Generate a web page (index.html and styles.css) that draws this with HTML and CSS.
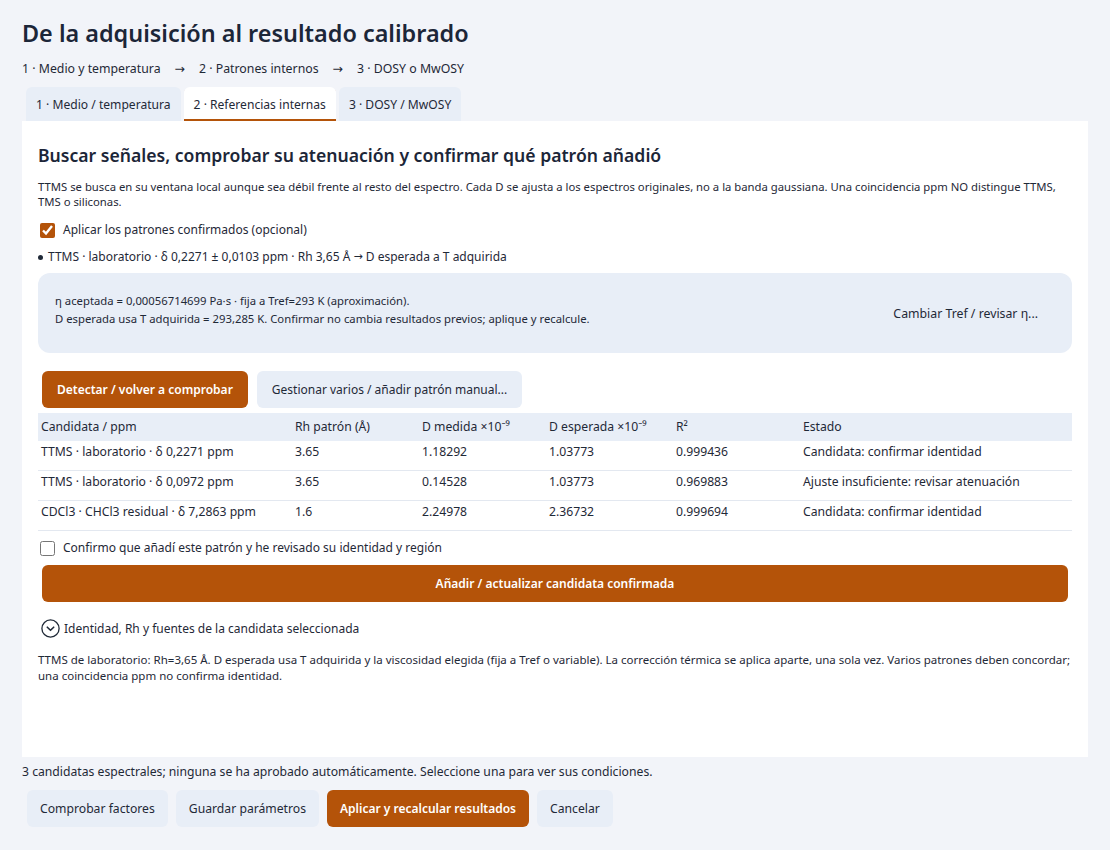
FILE: index.html
```html
<!DOCTYPE html>
<html lang="es">
<head>
    <meta charset="UTF-8">
    <meta name="viewport" content="width=device-width, initial-scale=1.0">
    <title>De la adquisición al resultado calibrado</title>
    <link rel="stylesheet" href="styles.css">
</head>
<body>
    <h1 class="page-title">De la adquisición al resultado calibrado</h1>

    <div class="steps">
        <span>1 · Medio y temperatura</span>
        <span class="arrow">→</span>
        <span>2 · Patrones internos</span>
        <span class="arrow">→</span>
        <span>3 · DOSY o MwOSY</span>
    </div>

    <div class="tabs">
        <button class="tab">1 · Medio / temperatura</button>
        <button class="tab active">2 · Referencias internas</button>
        <button class="tab">3 · DOSY / MwOSY</button>
    </div>

    <div class="panel">
        <h2 class="panel-title">Buscar señales, comprobar su atenuación y confirmar qué patrón añadió</h2>
        <p class="hint">TTMS se busca en su ventana local aunque sea débil frente al resto del espectro. Cada D se ajusta a los espectros originales, no a la banda gaussiana. Una coincidencia ppm NO distingue TTMS, TMS o siliconas.</p>

        <label class="check">
            <input type="checkbox" checked>
            <span>Aplicar los patrones confirmados (opcional)</span>
        </label>

        <div class="pattern-line"><span class="dot"></span>TTMS · laboratorio · δ 0,2271 ± 0,0103 ppm · Rh 3,65 Å <span class="arrow-inline">→</span> D esperada a T adquirida</div>

        <div class="info-box">
            <div class="info-text">
                η aceptada = 0,00056714699 Pa·s · fija a Tref=293 K (aproximación).<br>
                D esperada usa T adquirida = 293,285 K. Confirmar no cambia resultados previos; aplique y recalcule.
            </div>
            <button class="btn btn-flat">Cambiar Tref / revisar η...</button>
        </div>

        <div class="actions">
            <button class="btn btn-primary">Detectar / volver a comprobar</button>
            <button class="btn">Gestionar varios / añadir patrón manual...</button>
        </div>

        <table class="candidates">
            <colgroup>
                <col style="width: 254px">
                <col style="width: 127px">
                <col style="width: 127px">
                <col style="width: 127px">
                <col style="width: 127px">
                <col>
            </colgroup>
            <thead>
                <tr>
                    <th>Candidata / ppm</th>
                    <th>Rh patrón (Å)</th>
                    <th>D medida ×10⁻⁹</th>
                    <th>D esperada ×10⁻⁹</th>
                    <th>R²</th>
                    <th>Estado</th>
                </tr>
            </thead>
            <tbody>
                <tr>
                    <td>TTMS · laboratorio · δ 0,2271 ppm</td>
                    <td>3.65</td>
                    <td>1.18292</td>
                    <td>1.03773</td>
                    <td>0.999436</td>
                    <td>Candidata: confirmar identidad</td>
                </tr>
                <tr>
                    <td>TTMS · laboratorio · δ 0,0972 ppm</td>
                    <td>3.65</td>
                    <td>0.14528</td>
                    <td>1.03773</td>
                    <td>0.969883</td>
                    <td>Ajuste insuficiente: revisar atenuación</td>
                </tr>
                <tr>
                    <td>CDCl3 · CHCl3 residual · δ 7,2863 ppm</td>
                    <td>1.6</td>
                    <td>2.24978</td>
                    <td>2.36732</td>
                    <td>0.999694</td>
                    <td>Candidata: confirmar identidad</td>
                </tr>
            </tbody>
        </table>

        <label class="check check-confirm">
            <input type="checkbox">
            <span>Confirmo que añadí este patrón y he revisado su identidad y región</span>
        </label>

        <button class="btn btn-primary btn-wide">Añadir / actualizar candidata confirmada</button>

        <div class="toggle">
            <svg class="toggle-icon" width="19" height="19" viewBox="0 0 19 19">
                <circle cx="9.5" cy="9.5" r="8.6" fill="none" stroke="#1f2937" stroke-width="1.3"/>
                <path d="M6.3 8.2 L9.5 11.3 L12.7 8.2" fill="none" stroke="#1f2937" stroke-width="1.6" stroke-linecap="round" stroke-linejoin="round"/>
            </svg>
            <span>Identidad, Rh y fuentes de la candidata seleccionada</span>
        </div>

        <p class="note">TTMS de laboratorio: Rh=3,65 Å. D esperada usa T adquirida y la viscosidad elegida (fija a Tref o variable). La corrección térmica se aplica aparte, una sola vez. Varios patrones deben concordar; una coincidencia ppm no confirma identidad.</p>
    </div>

    <p class="status">3 candidatas espectrales; ninguna se ha aprobado automáticamente. Seleccione una para ver sus condiciones.</p>

    <div class="footer-actions">
        <button class="btn">Comprobar factores</button>
        <button class="btn">Guardar parámetros</button>
        <button class="btn btn-primary">Aplicar y recalcular resultados</button>
        <button class="btn">Cancelar</button>
    </div>
</body>
</html>
```

FILE: styles.css
```css
body {
    margin: 0;
    padding: 17px 22px 0;
    font-family: "Noto Sans", "Open Sans", sans-serif;
    background-color: #f2f4f9;
    color: #1f2937;
}

.page-title {
    margin: 0;
    font-size: 23.4px;
    line-height: 32px;
    font-weight: 600;
    color: #1c2638;
}

.steps {
    display: flex;
    gap: 14px;
    margin-top: 11px;
    font-size: 12.3px;
    line-height: 18px;
}

.steps .arrow {
    font-family: "DejaVu Sans", sans-serif;
    font-size: 12.5px;
}

.arrow-inline {
    font-family: "DejaVu Sans", sans-serif;
    font-size: 11px;
}

.tabs {
    display: flex;
    gap: 3px;
    margin-top: 9px;
    padding-left: 4px;
}

.tab {
    height: 34px;
    padding: 0 10px;
    border: none;
    border-radius: 6px 6px 0 0;
    background-color: #e8eef7;
    font-family: inherit;
    font-size: 12.1px;
    color: #1f2937;
    cursor: pointer;
}

.tab.active {
    background-color: #fff;
    box-shadow: inset 0 -2px 0 #b45309;
}

.panel {
    box-sizing: border-box;
    min-height: 636px;
    padding: 22px 16px 16px;
    background-color: #fff;
}

.panel-title {
    margin: 0;
    font-size: 17.6px;
    line-height: 24px;
    font-weight: 600;
    color: #1c2638;
}

.hint {
    margin: 12px 0 0;
    font-size: 11.3px;
    line-height: 15px;
}

.check {
    display: flex;
    align-items: center;
    gap: 8px;
    margin-top: 12px;
    font-size: 12px;
    line-height: 18px;
}

.check input {
    width: 15px;
    height: 15px;
    margin: 0 0 0 2px;
    accent-color: #b45309;
}

.pattern-line {
    display: flex;
    align-items: center;
    margin-top: 9px;
    font-size: 12px;
    line-height: 18px;
    white-space: pre;
}

.dot {
    width: 5px;
    height: 5px;
    margin-right: 5px;
    border-radius: 50%;
    background-color: #1f2937;
}

.info-box {
    display: flex;
    align-items: center;
    justify-content: space-between;
    box-sizing: border-box;
    min-height: 80px;
    margin-top: 7px;
    padding: 12px 15px 12px 17px;
    border-radius: 12px;
    background-color: #e8eef7;
}

.info-text {
    padding-bottom: 6px;
    font-size: 11.3px;
    line-height: 18px;
}

.btn {
    margin: 4px;
    padding: 9px 15px;
    border: none;
    border-radius: 6px;
    background-color: #e8eef7;
    font-family: inherit;
    font-size: 12px;
    line-height: 19px;
    color: #1f2937;
    cursor: pointer;
}

.btn-primary {
    background-color: #b45309;
    color: #fff;
    font-weight: 600;
}

.btn-flat {
    background: transparent;
    font-size: 12.3px;
}

.actions {
    display: flex;
    gap: 1px;
    margin-top: 14px;
}

.candidates {
    width: 100%;
    margin-top: 1px;
    border-collapse: collapse;
    table-layout: fixed;
    font-size: 12.2px;
}

.candidates th {
    padding: 5px 3px;
    background-color: #e8eef7;
    font-weight: 400;
    line-height: 18px;
    text-align: left;
}

.candidates td {
    padding: 2px 3px 10px;
    border-bottom: 1px solid #e3e8f0;
    line-height: 17px;
    white-space: nowrap;
}

.check-confirm {
    margin-top: 8px;
}

.btn-wide {
    display: block;
    width: calc(100% - 8px);
    margin-top: 8px;
}

.toggle {
    display: flex;
    align-items: center;
    gap: 4px;
    margin-top: 17px;
    margin-left: 3px;
    font-size: 12px;
    line-height: 19px;
}

.note {
    margin: 14px 0 0;
    font-size: 11.5px;
    line-height: 16px;
}

.status {
    margin: 6px 0 0;
    font-size: 12.2px;
    line-height: 17px;
}

.footer-actions {
    display: flex;
    margin-top: 6px;
    margin-left: 1px;
}

.footer-actions .btn {
    padding: 9px 13px;
    font-size: 12.2px;
}

.footer-actions .btn-primary {
    font-size: 12px;
}
```
